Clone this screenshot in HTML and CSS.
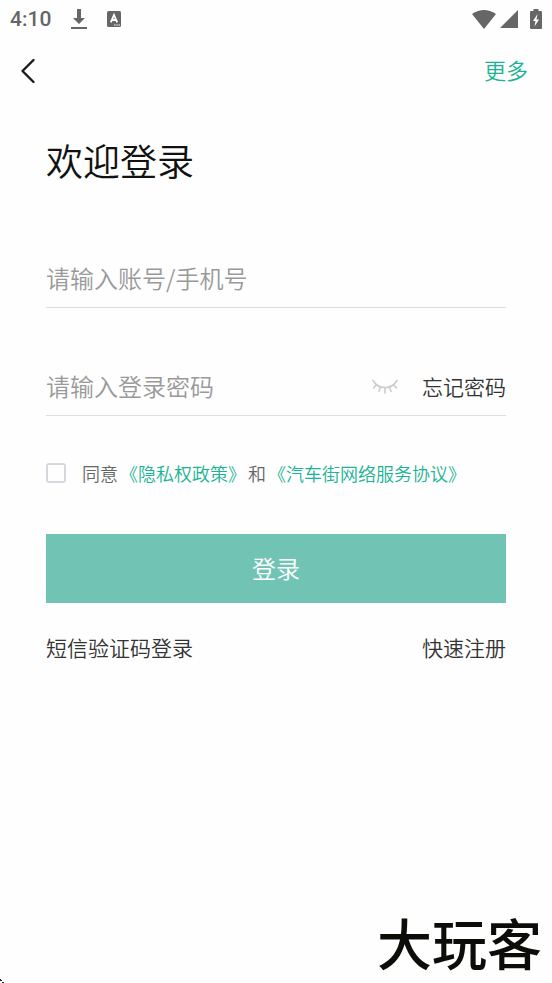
FILE: index.html
```html
<!DOCTYPE html>
<html lang="zh-CN">
<head>
<meta charset="utf-8">
<meta name="viewport" content="width=device-width, initial-scale=1">
<title>欢迎登录</title>
<link rel="stylesheet" href="styles.css">
</head>
<body>
<div class="status">
  <div class="status-group">
    <span class="time">4:10</span>
    <svg class="download" width="16" height="22" viewBox="0 0 16 22" aria-hidden="true"><path d="M6 1h4v9h4l-6 6-6-6h4zM0 19h16v2H0z" fill="#666"/></svg>
    <svg width="14" height="16" viewBox="0 0 14 16" aria-hidden="true"><rect width="14" height="16" rx="1.5" fill="#666"/><path d="M3.8 11.3 7 4l3.2 7.300M5 9h4" fill="none" stroke="#fff" stroke-width="1.800"/><path d="M7 14h1.500M9.300 14h1.500M11.500 14H13" stroke="#fff" stroke-width="1"/></svg>
  </div>
  <div class="status-group icons">
    <svg width="24" height="19" viewBox="0 0 24 19" aria-hidden="true"><path d="M0 4Q12-4 24 4L12 19z" fill="#666"/></svg>
    <svg width="18" height="18" viewBox="0 0 18 18" aria-hidden="true"><path d="M18 0v18H0z" fill="#666"/></svg>
    <svg class="battery" width="12" height="20" viewBox="0 0 12 20" aria-hidden="true"><path d="M3.500 0h5v2H11q1 0 1 1v16q0 1-1 1H1q-1 0-1-1V3q0-1 1-1h2.500z" fill="#666"/><path d="M7.500 5 3 12h2.500L4.500 17.500 9 10.500H6.500z" fill="#fff"/></svg>
  </div>
</div>
<header class="nav">
  <button class="back" type="button" aria-label="返回"><svg width="16" height="26" viewBox="0 0 16 26" aria-hidden="true"><path d="M13.500 2 2.500 13l11 11" fill="none" stroke="#1b1b1b" stroke-width="2.400" stroke-linecap="round" stroke-linejoin="round"/></svg></button>
  <a class="more" href="#">更多</a>
</header>
<main class="content">
  <h1>欢迎登录</h1>
  <form>
    <div class="field">
      <input type="text" aria-label="账号" placeholder="请输入账号/手机号">
    </div>
    <div class="field">
      <input type="password" aria-label="登录密码" placeholder="请输入登录密码">
      <button class="eye" type="button" aria-label="显示密码"><svg width="26" height="18" viewBox="0 -2 26 18" aria-hidden="true"><path d="M1 1.500Q5 8.500 13 8.500T25 1.500M4.500 5.500 1.500 9M8.500 8 7 12.500M13 8.500V14M17.500 8 19 12.500M21.500 5.500l3 3.500" fill="none" stroke="#ccc" stroke-width="1.600" stroke-linecap="round"/></svg></button>
      <a class="plain" href="#">忘记密码</a>
    </div>
    <div class="agree">
      <input id="agree" type="checkbox">
      <label for="agree">同意</label>
      <a href="#">《隐私权政策》</a>
      <span>和</span>
      <a href="#">《汽车街网络服务协议》</a>
    </div>
    <button class="submit" type="submit">登录</button>
  </form>
  <div class="links">
    <a class="plain" href="#">短信验证码登录</a>
    <a class="plain" href="#">快速注册</a>
  </div>
</main>
<footer class="footer">
  <svg width="4" height="4" viewBox="0 0 4 4" aria-hidden="true"><path d="M0 0h1v1h1v1H0zM2 3h2v1H2z" fill="#222"/></svg>
  <span class="brand">大玩客</span>
</footer>
</body>
</html>
```
FILE: styles.css
```css
* { box-sizing: border-box; }
body {
  margin: 0;
  min-height: 100vh;
  display: flex;
  flex-direction: column;
  background: #fefefe;
  color: #333;
  font-family: "Noto Sans CJK SC", sans-serif;
  font-weight: 350;
}
a { color: #1ab394; text-decoration: none; }
button { border: 0; padding: 0; background: none; font: inherit; }
svg { display: block; flex: none; }
.status {
  height: 38px;
  padding: 0 10px;
  display: flex;
  align-items: center;
  justify-content: space-between;
}
.status-group { display: flex; align-items: center; gap: 20px; }
.icons { gap: 4px; }
.battery { margin-left: 8px; }
.time { font: 500 21px/24px Roboto, sans-serif; color: #666; }
.nav {
  height: 66px;
  padding: 0 24px 0 20px;
  display: flex;
  align-items: center;
  justify-content: space-between;
}
.more { font-size: 22px; line-height: 32px; padding-bottom: 4px; }
.content { padding: 28px 46px 0; }
h1 {
  margin: 0 0 60px;
  font-size: 37px;
  font-weight: 350;
  line-height: 56px;
  color: #111;
}
.field {
  height: 60px;
  margin-bottom: 48px;
  display: flex;
  align-items: center;
  border-bottom: 1px solid #ddd;
}
.field input {
  flex: 1;
  min-width: 0;
  padding: 0;
  border: 0;
  outline: 0;
  background: none;
  font: 350 24px/36px "Noto Sans CJK SC", sans-serif;
  color: #333;
}
.field input::placeholder { color: #999; opacity: 1; }
.eye { margin-right: 24px; }
.plain { font-size: 21px; line-height: 32px; color: #333; }
.agree {
  margin-top: -5px;
  display: flex;
  align-items: center;
  gap: 2px;
  font-size: 18px;
  line-height: 28px;
  color: #666;
  white-space: nowrap;
}
.agree input {
  appearance: none;
  flex: none;
  width: 20px;
  height: 20px;
  margin: 0 14px 0 0;
  border: 2px solid #d5d8dc;
  border-radius: 3px;
}
.submit {
  display: block;
  width: 100%;
  height: 69px;
  margin: 47px 0 28px;
  padding-bottom: 2px;
  background: #71c4b4;
  color: #fff;
  font-size: 24px;
}
.links { display: flex; justify-content: space-between; }
.footer {
  margin-top: auto;
  padding-right: 10px;
  display: flex;
  align-items: flex-end;
  justify-content: space-between;
}
.brand {
  font-size: 55px;
  font-weight: 500;
  line-height: 84px;
  color: #0c0c08;
}
```
